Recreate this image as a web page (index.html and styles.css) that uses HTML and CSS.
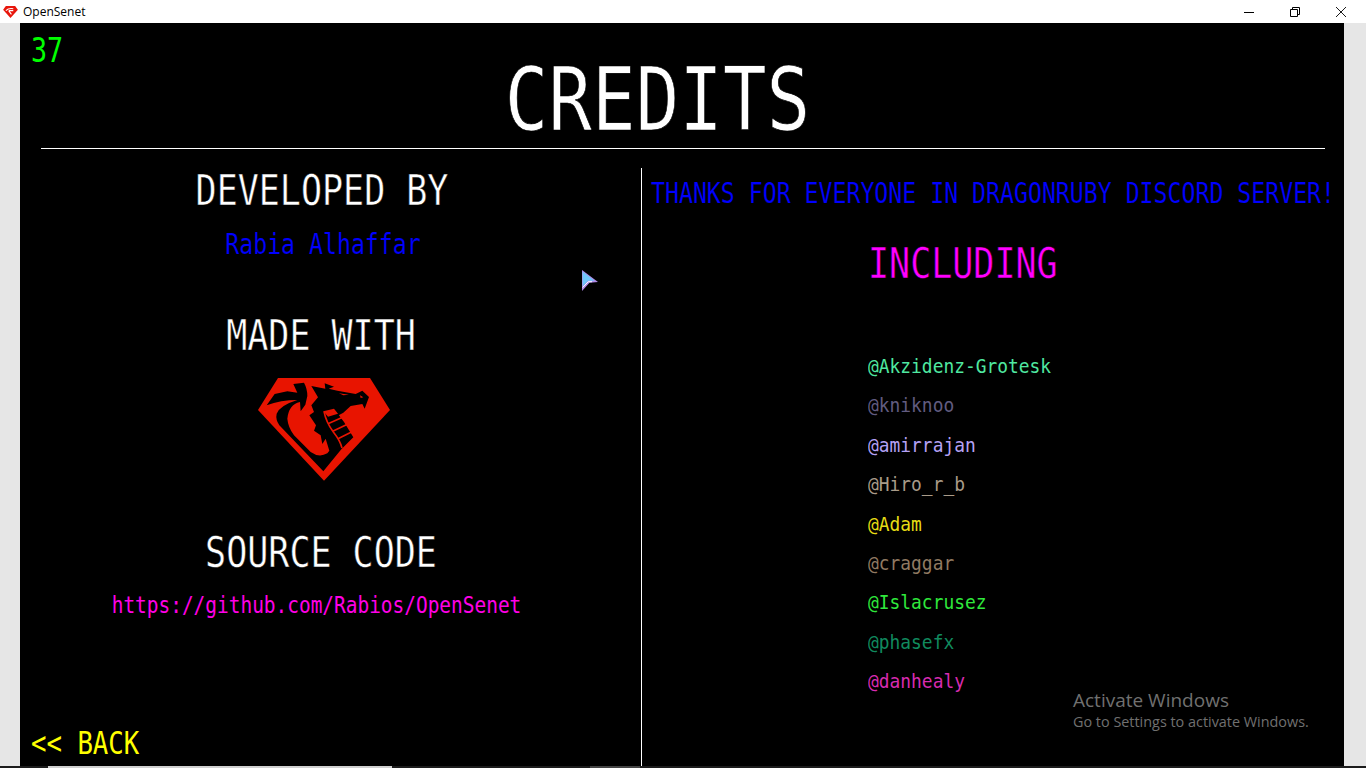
FILE: index.html
```
<!DOCTYPE html>
<html>
<head>
    <meta charset="UTF-8">
    <title>OpenSenet</title>
    <link rel="stylesheet" href="styles.css">
</head>
<body>
    <div class="titlebar">
        <svg class="app-icon" viewBox="0 0 16 13">
            <path d="M3,0 L13,0 L16,4 L8,13 L0,4 Z" fill="#e8160c"/>
            <path d="M3,5 Q6,2 11,3 M6,5 L9,9 M6,5 L11,5" stroke="#ffffff" stroke-width="1.2" fill="none"/>
        </svg>
        <span class="app-name">OpenSenet</span>
        <div class="window-buttons">
            <div class="window-button">
                <svg viewBox="0 0 10 10"><path d="M0,5.5 H10" stroke="#000" fill="none"/></svg>
            </div>
            <div class="window-button">
                <svg viewBox="0 0 10 10"><path d="M0.5,2.5 H7.5 V9.5 H0.5 Z M2.5,2.5 V0.5 H9.5 V7.5 H7.5" stroke="#000" fill="none"/></svg>
            </div>
            <div class="window-button">
                <svg viewBox="0 0 10 10"><path d="M0,0 L10,10 M10,0 L0,10" stroke="#000" stroke-width="0.9" fill="none"/></svg>
            </div>
        </div>
    </div>

    <div class="window">
        <div class="stage">
            <div class="fps">37</div>

            <h1 class="title">CREDITS</h1>
            <div class="title-rule"></div>

            <div class="columns">
                <div class="left-col">
                    <h2 class="heading developed">DEVELOPED BY</h2>
                    <p class="author">Rabia Alhaffar</p>
                    <h2 class="heading made-with">MADE WITH</h2>
                    <svg class="logo" viewBox="0 0 420 336">
                        <path d="M72,18 L348,18 L408,114 L210,326 L12,114 Z" fill="#e81400"/>
                        <path d="M38,100 L62,66 L100,58 L130,62 L118,36 L150,32 Q160,50 160,72 L154,98 L140,118 L138,90 Q104,98 100,140 Q102,165 120,190 L170,240 Q195,258 220,244 L226,236 L215,200 L205,216 L200,190 L180,176 L186,160 L166,130 L180,120 L172,100 L192,76 L172,42 L214,50 L212,34 L240,44 L224,50 L250,56 L305,66 L325,56 L345,75 L332,110 L325,96 L290,102 L268,122 L254,130 L240,110 L270,150 L298,196 L262,232 L208,298 L76,160 Q64,142 68,125 Q78,100 130,84 Q80,84 38,100 Z" fill="#000000"/>
                        <path d="M208,118 L240,110 L252,125 L222,134 Z" fill="#e81400"/>
                        <path d="M210,118 Q216,150 238,180 Q258,205 264,228 M222,155 L266,136 M236,178 L282,156 M252,200 L300,176" stroke="#e81400" stroke-width="5" fill="none"/>
                        <path d="M255,64 L285,68 L268,70 Z M318,70 L328,76 L320,78 Z" fill="#e81400"/>
                    </svg>
                    <h2 class="heading source-code">SOURCE CODE</h2>
                    <p class="repo-link">https://github.com/Rabios/OpenSenet</p>
                    <div class="back">&lt;&lt; BACK</div>
                </div>

                <div class="right-col">
                    <p class="thanks">THANKS FOR EVERYONE IN DRAGONRUBY DISCORD SERVER!</p>
                    <h2 class="heading including">INCLUDING</h2>
                    <ul class="people">
                        <li class="akzidenz">@Akzidenz-Grotesk</li>
                        <li class="kniknoo">@kniknoo</li>
                        <li class="amirrajan">@amirrajan</li>
                        <li class="hiro">@Hiro_r_b</li>
                        <li class="adam">@Adam</li>
                        <li class="craggar">@craggar</li>
                        <li class="islacrusez">@Islacrusez</li>
                        <li class="phasefx">@phasefx</li>
                        <li class="danhealy">@danhealy</li>
                    </ul>
                </div>
            </div>

            <svg class="cursor" viewBox="0 0 16 21">
                <path d="M0,0 L16,12 L7.5,12.7 L0,21 Z" fill="#b18be8"/>
                <path d="M0.6,1.5 L12.5,10.8 L6,10.8 L0.6,16.5 Z" fill="#6fc6fa"/>
                <path d="M0.6,17.5 L6.3,11.7 L10,11.7" stroke="#ffffff" stroke-width="1" fill="none"/>
            </svg>

            <div class="watermark">
                <div class="watermark-title">Activate Windows</div>
                <div class="watermark-text">Go to Settings to activate Windows.</div>
            </div>
        </div>
    </div>

    <div class="taskbar">
        <div class="task-gap-a"></div>
        <div class="task-light"></div>
        <div class="task-gap-b"></div>
        <div class="task-mid"></div>
    </div>
</body>
</html>
```

FILE: styles.css
```
/* Ventana del juego */
html, body {
    margin: 0;
    padding: 0;
    height: 768px;
    overflow: hidden;
}
body {
    font-family: "DejaVu Sans Mono", monospace;
    background-color: #e6e6e6;
    display: flex;
    flex-direction: column;
}
h1, h2, p, ul {
    margin: 0;
    padding: 0;
    font-weight: normal;
}

/* Barra de titulo */
.titlebar {
    height: 23px;
    background-color: #ffffff;
    display: flex;
    align-items: center;
    flex-shrink: 0;
}
.app-icon {
    width: 15px;
    height: 12px;
    margin-left: 3px;
}
.app-name {
    font-family: "Open Sans", sans-serif;
    font-size: 12px;
    color: #000000;
    margin-left: 5px;
}
.window-buttons {
    display: flex;
    margin-left: auto;
    margin-right: 2px;
}
.window-button {
    width: 46px;
    height: 23px;
    display: flex;
    align-items: center;
    justify-content: center;
}
.window-button svg {
    width: 10px;
    height: 10px;
}

/* Escena */
.window {
    flex: 1;
    padding: 0 22px 0 20px;
    min-height: 0;
    display: flex;
}
.stage {
    position: relative;
    flex: 1;
    background-color: #000000;
    display: flex;
    flex-direction: column;
    overflow: hidden;
}
.fps {
    position: absolute;
    left: 11px;
    top: 11px;
    font-size: 26.7px;
    line-height: 34px;
    color: #00ff00;
    transform: scaleY(1.25);
}
.title {
    font-size: 72.5px;
    line-height: 84px;
    margin-top: 35px;
    margin-right: 49px;
    text-align: center;
    color: #ffffff;
    transform: scaleY(1.2);
    -webkit-text-stroke: 0.6px #000000;
}
.title-rule {
    height: 1px;
    margin: 6px 19px 0 21px;
    background-color: #ffffff;
    flex-shrink: 0;
}
.columns {
    flex: 1;
    display: flex;
    margin-top: 19px;
    min-height: 0;
}

/* Columna izquierda */
.left-col {
    width: 621px;
    padding-right: 19px;
    box-sizing: border-box;
    display: flex;
    flex-direction: column;
    align-items: center;
}
.heading {
    font-size: 35px;
    line-height: 44px;
    color: #ffffff;
    transform: scaleY(1.2);
    -webkit-text-stroke: 0.4px #000000;
}
.developed {
    margin-top: 1px;
    margin-left: 2px;
}
.author {
    font-size: 23.2px;
    line-height: 30px;
    margin-top: 16px;
    margin-left: 4px;
    color: #0000ff;
    transform: scaleY(1.2);
    -webkit-text-stroke: 0.15px #000000;
}
.made-with {
    margin-top: 55px;
}
.logo {
    width: 140px;
    height: 112px;
    margin-top: 14px;
    margin-left: 6px;
}
.source-code {
    margin-top: 47px;
}
.repo-link {
    font-size: 19.45px;
    line-height: 26px;
    margin-top: 18px;
    margin-right: 9px;
    color: #ff00e6;
    transform: scaleY(1.15);
}
.back {
    align-self: flex-start;
    margin-top: auto;
    margin-left: 11px;
    margin-bottom: 8px;
    font-size: 25.7px;
    line-height: 30px;
    color: #ffff00;
    transform: scaleY(1.23);
}

/* Columna derecha */
.right-col {
    flex: 1;
    border-left: 1px solid #ffffff;
    padding-top: 10px;
    padding-left: 9px;
    white-space: nowrap;
}
.thanks {
    font-size: 23.2px;
    line-height: 30px;
    color: #0000ff;
    transform: scaleY(1.2);
    -webkit-text-stroke: 0.15px #000000;
}
.including {
    margin-top: 34px;
    margin-left: 217px;
    color: #ff00ff;
}
.people {
    list-style: none;
    margin-top: 60px;
    margin-left: 217px;
    font-size: 17.9px;
    line-height: 39.4px;
}
.people li {
    transform: scaleY(1.1);
}
.akzidenz { color: #4fe8a0; }
.kniknoo { color: #625c80; }
.amirrajan { color: #b5a2f5; }
.hiro { color: #a99b89; }
.adam { color: #e6dc14; }
.craggar { color: #907a62; }
.islacrusez { color: #2fe83c; }
.phasefx { color: #108a5e; }
.danhealy { color: #d82bb0; }

/* Cosas encima de la escena */
.cursor {
    position: absolute;
    left: 562px;
    top: 247px;
    width: 16px;
    height: 21px;
}
.watermark {
    position: absolute;
    left: 1053px;
    top: 665px;
    font-family: "Open Sans", sans-serif;
    color: #707070;
}
.watermark-title {
    font-size: 19px;
    line-height: 24px;
}
.watermark-text {
    font-size: 14.4px;
    line-height: 20px;
}

/* Resto de la barra de tareas */
.taskbar {
    height: 2px;
    flex-shrink: 0;
    background-color: #1c1c1c;
    display: flex;
}
.task-gap-a { width: 48px; }
.task-light {
    width: 344px;
    background-color: #d0d0d0;
}
.task-gap-b { width: 198px; }
.task-mid {
    width: 50px;
    background-color: #444444;
}
```
